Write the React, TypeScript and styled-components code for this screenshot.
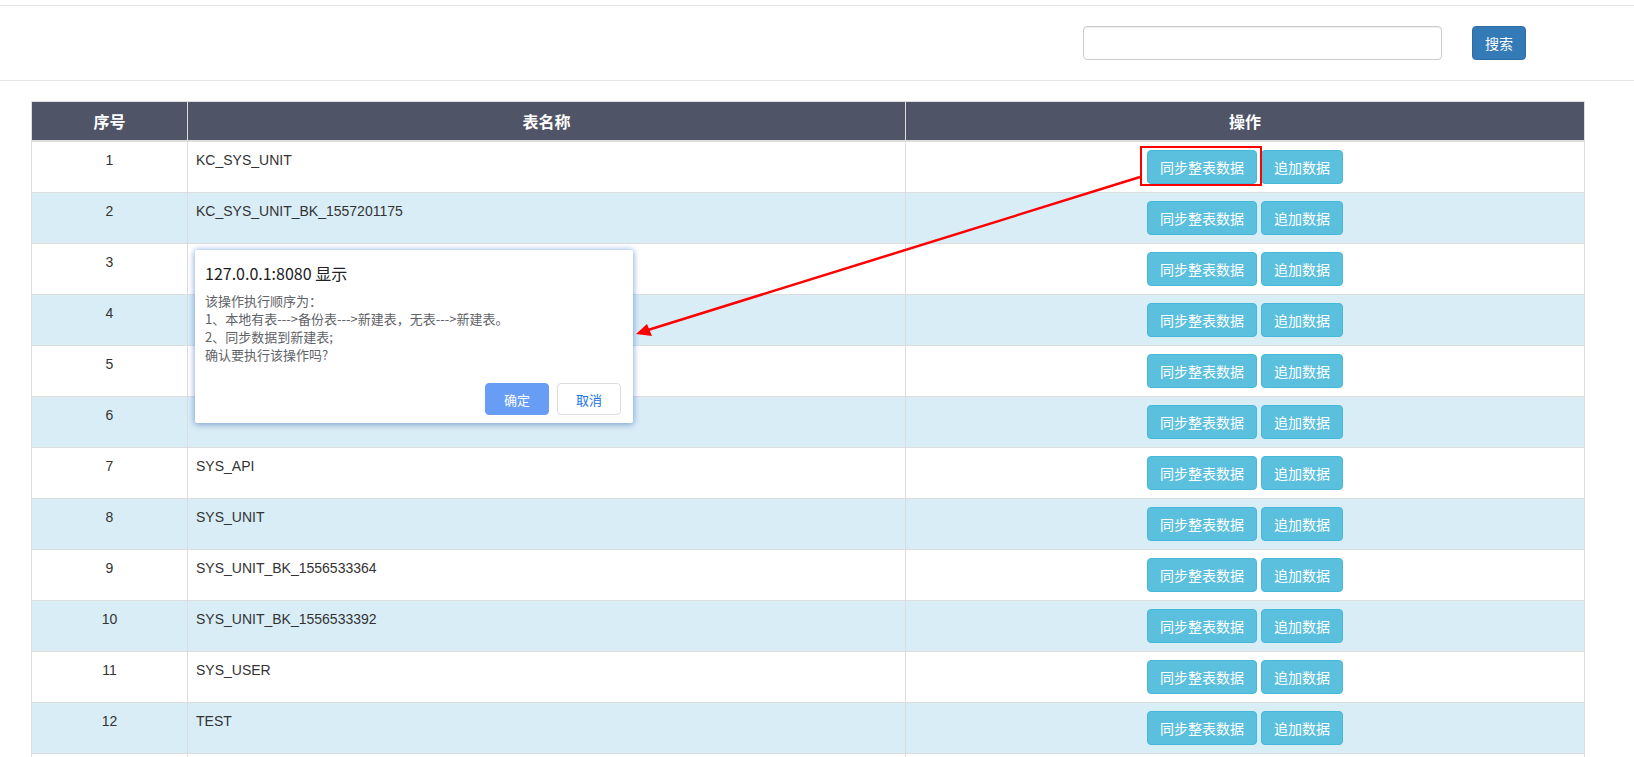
import styled, { createGlobalStyle } from 'styled-components';

const GlobalStyle = createGlobalStyle`
  html, body {
    margin: 0;
    padding: 0;
    background: #fff;
  }
  body {
    font-family: "Liberation Sans", Arial, "Noto Sans CJK SC", sans-serif;
    font-size: 14px;
    color: #333;
  }
`;

const tables = [
  'KC_SYS_UNIT',
  'KC_SYS_UNIT_BK_1557201175',
  'KC_SYS_UNIT_BK_1557201290',
  'KC_USER',
  'KC_USER_BK_1557201300',
  'SYSLOG',
  'SYS_API',
  'SYS_UNIT',
  'SYS_UNIT_BK_1556533364',
  'SYS_UNIT_BK_1556533392',
  'SYS_USER',
  'TEST',
  'TEST_BK_1556533401',
];

const Page = styled.div`
  position: relative;
  width: 1634px;
  min-height: 757px;
`;

const TopStrip = styled.div`
  height: 5px;
  border-bottom: 1px solid #e7e7e7;
`;

const SearchBar = styled.div`
  display: flex;
  justify-content: flex-end;
  align-items: center;
  gap: 30px;
  padding: 20px 108px 20px 0;
  border-bottom: 1px solid #e7e7e7;
`;

const SearchInput = styled.input`
  box-sizing: border-box;
  width: 359px;
  height: 34px;
  padding: 6px 12px;
  border: 1px solid #ccc;
  border-radius: 4px;
  box-shadow: inset 0 1px 1px rgba(0, 0, 0, 0.075);
  font-size: 14px;
  outline: none;
`;

const Btn = styled.button<{ $variant: 'primary' | 'info' }>`
  box-sizing: border-box;
  height: 34px;
  padding: 6px 12px;
  font-family: "Noto Sans CJK SC", "Liberation Sans", sans-serif;
  font-size: 14px;
  line-height: 20px;
  color: #fff;
  border-radius: 4px;
  border: 1px solid ${p => (p.$variant === 'primary' ? '#2e6da4' : '#46b8da')};
  background: ${p => (p.$variant === 'primary' ? '#337ab7' : '#5bc0de')};
  cursor: pointer;
`;

const TableWrap = styled.div`
  padding: 20px 49px 0 31px;
`;

const DataTable = styled.table`
  width: 100%;
  table-layout: fixed;
  border-collapse: collapse;
  border: 1px solid #ddd;
`;

const Th = styled.th<{ $w?: number }>`
  box-sizing: border-box;
  ${p => (p.$w ? `width: ${p.$w}px;` : '')}
  padding: 9px 8px 9px;
  background: #4f5467;
  color: #fff;
  font-family: "Noto Sans CJK SC", sans-serif;
  font-size: 16px;
  font-weight: bold;
  line-height: 20px;
  text-align: center;
  border: 1px solid #ddd;
  border-bottom-width: 2px;
`;

const Row = styled.tr<{ $striped: boolean }>`
  background: ${p => (p.$striped ? '#d9edf7' : '#fff')};
`;

const Td = styled.td<{ $center?: boolean }>`
  padding: 8px;
  line-height: 20px;
  vertical-align: top;
  border: 1px solid #ddd;
  text-align: ${p => (p.$center ? 'center' : 'left')};
`;

const Actions = styled.div`
  display: flex;
  justify-content: center;
  gap: 4px;
`;

const Annotation = styled.svg`
  position: absolute;
  left: 0;
  top: 0;
  pointer-events: none;
`;

const Dialog = styled.div`
  position: absolute;
  left: 195px;
  top: 250px;
  box-sizing: border-box;
  width: 438px;
  height: 173px;
  padding: 13px 12px 8px 10px;
  background: #fff;
  border-radius: 2px;
  box-shadow: 0 0 6px rgba(66, 133, 244, 0.55), 0 2px 6px rgba(60, 64, 67, 0.25);
  font-family: "Noto Sans CJK SC", sans-serif;
  display: flex;
  flex-direction: column;
`;

const DialogTitle = styled.div`
  font-size: 16px;
  line-height: 20px;
  color: #202124;
`;

const DialogMessage = styled.div`
  margin-top: 9px;
  font-size: 13px;
  line-height: 18px;
  color: #5f6368;
`;

const DialogButtons = styled.div`
  margin-top: auto;
  display: flex;
  justify-content: flex-end;
  gap: 8px;
`;

const DialogBtn = styled.button<{ $primary?: boolean }>`
  box-sizing: border-box;
  width: 64px;
  height: 32px;
  border-radius: 4px;
  font-family: "Noto Sans CJK SC", sans-serif;
  font-size: 13px;
  border: 1px solid ${p => (p.$primary ? '#689df6' : '#dadce0')};
  background: ${p => (p.$primary ? '#689df6' : '#fff')};
  color: ${p => (p.$primary ? '#fff' : '#1a73e8')};
`;

export default function App() {
  return (
    <Page>
      <GlobalStyle />
      <TopStrip />
      <SearchBar>
        <SearchInput type="text" />
        <Btn $variant="primary">搜索</Btn>
      </SearchBar>

      <TableWrap>
        <DataTable>
          <thead>
            <tr>
              <Th $w={156}>序号</Th>
              <Th $w={718}>表名称</Th>
              <Th>操作</Th>
            </tr>
          </thead>
          <tbody>
            {tables.map((name, i) => (
              <Row key={name} $striped={i % 2 === 1}>
                <Td $center>{i + 1}</Td>
                <Td>{name}</Td>
                <Td>
                  <Actions>
                    <Btn $variant="info">同步整表数据</Btn>
                    <Btn $variant="info">追加数据</Btn>
                  </Actions>
                </Td>
              </Row>
            ))}
          </tbody>
        </DataTable>
      </TableWrap>

      <Dialog>
        <DialogTitle>127.0.0.1:8080 显示</DialogTitle>
        <DialogMessage>
          该操作执行顺序为：
          <br />
          1、本地有表---&gt;备份表---&gt;新建表，无表---&gt;新建表。
          <br />
          2、同步数据到新建表;
          <br />
          确认要执行该操作吗?
        </DialogMessage>
        <DialogButtons>
          <DialogBtn $primary>确定</DialogBtn>
          <DialogBtn>取消</DialogBtn>
        </DialogButtons>
      </Dialog>

      {/* red markup drawn over the screenshot */}
      <Annotation width={1634} height={757} viewBox="0 0 1634 757">
        <rect x={1141} y={147} width={120} height={38} fill="none" stroke="#f00" strokeWidth={2} />
        <line x1={1140} y1={177} x2={648} y2={330} stroke="#f00" strokeWidth={2.5} />
        <polygon points="636,334 647,324 652,336" fill="#f00" />
      </Annotation>
    </Page>
  );
}
